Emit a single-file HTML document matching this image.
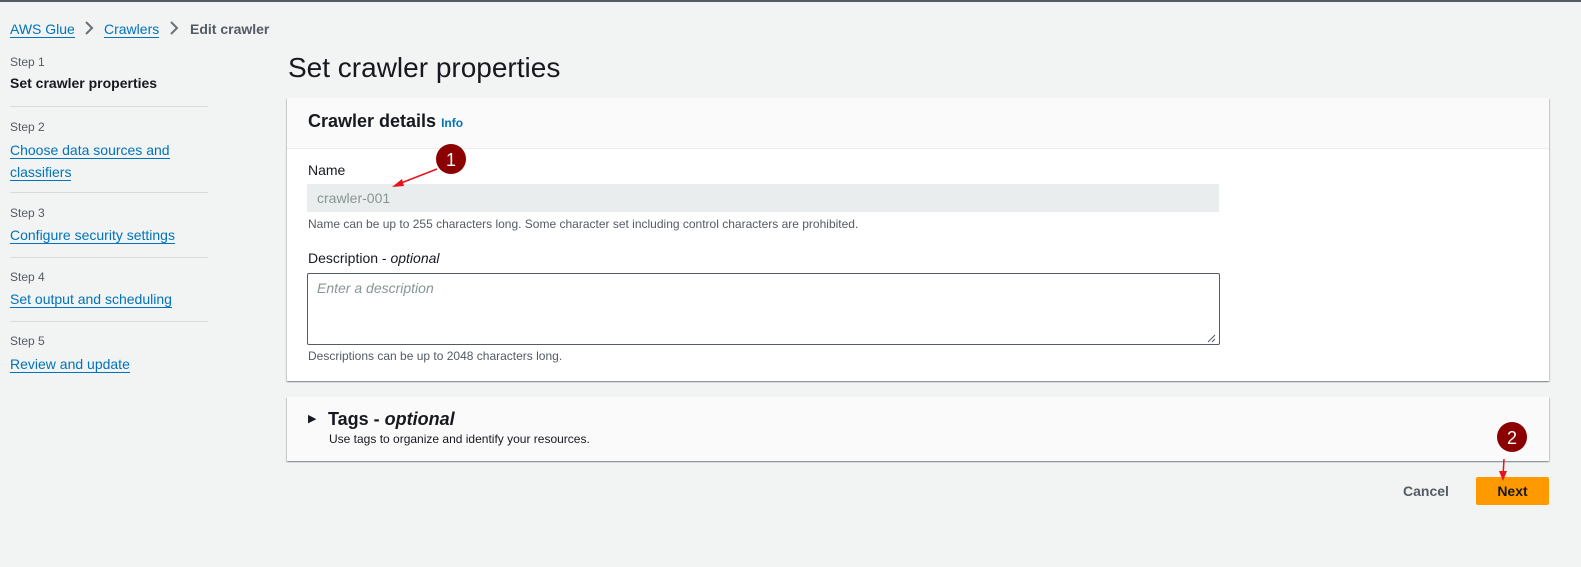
<!DOCTYPE html>
<html><head><meta charset="utf-8"><style>
body{margin:0;width:1581px;height:567px;background:#f2f3f3;font-family:"Liberation Sans",sans-serif;position:relative;overflow:hidden;color:#16191f}
.a{position:absolute;white-space:nowrap}
.sl{color:#0073bb;border-bottom:1px solid #0073bb;line-height:20px}
.step{font-size:12px;color:#545b64}
.sep{position:absolute;left:10px;width:198px;height:1px;background:#d5dbdb}
.card{position:absolute;left:287px;width:1262px;background:#fff;box-shadow:0 1px 1px rgba(0,28,36,.3),1px 1px 1px rgba(0,28,36,.15),-1px 1px 1px rgba(0,28,36,.15)}
.hint{font-size:12px;color:#545b64}
</style></head><body>
<div class="a" style="left:0;top:0;width:1581px;height:2px;background:#545b64"></div>
<div class="a" style="left:10px;top:19px;font-size:14px"><span class="sl">AWS Glue</span></div>
<svg class="a" style="left:83px;top:20px" width="12" height="16"><path d="M3 2 L9 8 L3 14" stroke="#687078" stroke-width="2" fill="none"/></svg>
<div class="a" style="left:104px;top:19px;font-size:14px"><span class="sl">Crawlers</span></div>
<svg class="a" style="left:168px;top:20px" width="12" height="16"><path d="M3 2 L9 8 L3 14" stroke="#687078" stroke-width="2" fill="none"/></svg>
<div class="a" style="left:190px;top:21px;font-size:14px;font-weight:bold;color:#545b64">Edit crawler</div>

<div class="a step" style="left:10px;top:55px">Step 1</div>
<div class="a" style="left:10px;top:75px;font-size:14px;font-weight:bold">Set crawler properties</div>
<div class="sep" style="top:106px"></div>
<div class="a step" style="left:10px;top:120px">Step 2</div>
<div class="a" style="left:10px;top:139px;font-size:14px;line-height:22px"><span class="sl">Choose data sources and</span><br><span class="sl">classifiers</span></div>
<div class="sep" style="top:192px"></div>
<div class="a step" style="left:10px;top:206px">Step 3</div>
<div class="a" style="left:10px;top:225px;font-size:14px"><span class="sl">Configure security settings</span></div>
<div class="sep" style="top:257px"></div>
<div class="a step" style="left:10px;top:270px">Step 4</div>
<div class="a" style="left:10px;top:289px;font-size:14px"><span class="sl">Set output and scheduling</span></div>
<div class="sep" style="top:321px"></div>
<div class="a step" style="left:10px;top:334px">Step 5</div>
<div class="a" style="left:10px;top:354px;font-size:14px"><span class="sl">Review and update</span></div>

<div class="a" style="left:288px;top:52px;font-size:28px;color:#16191f">Set crawler properties</div>

<div class="card" style="top:98px;height:283px">
<div style="height:50px;background:#fafafa;border-bottom:1px solid #eaeded"></div>
</div>
<div class="a" style="left:308px;top:111px;font-size:18px;font-weight:bold">Crawler details <span style="font-size:12px;color:#0073bb">Info</span></div>
<div class="a" style="left:308px;top:162px;font-size:14px">Name</div>
<div class="a" style="left:307px;top:184px;width:912px;height:28px;background:#eaeded"></div>
<div class="a" style="left:317px;top:190px;font-size:14px;color:#879596">crawler-001</div>
<div class="a hint" style="left:308px;top:217px">Name can be up to 255 characters long. Some character set including control characters are prohibited.</div>
<div class="a" style="left:308px;top:250px;font-size:14px">Description - <i>optional</i></div>
<div class="a" style="left:307px;top:273px;width:911px;height:70px;border:1px solid #545b64;border-radius:2px"></div>
<div class="a" style="left:317px;top:280px;font-size:14px;color:#879596;font-style:italic">Enter a description</div>
<svg class="a" style="left:1206px;top:333px" width="10" height="10"><path d="M9 2 L2 9 M9 6 L6 9" stroke="#545b64" stroke-width="1"/></svg>
<div class="a hint" style="left:308px;top:349px">Descriptions can be up to 2048 characters long.</div>

<div class="card" style="top:397px;height:64px;background:#fafafa"></div>
<div class="a" style="left:308px;top:412px;font-size:11px">&#9654;</div>
<div class="a" style="left:328px;top:409px;font-size:18px;font-weight:bold">Tags - <i>optional</i></div>
<div class="a hint" style="left:329px;top:432px;color:#16191f">Use tags to organize and identify your resources.</div>

<div class="a" style="left:1403px;top:483px;font-size:14px;font-weight:bold;color:#545b64">Cancel</div>
<div class="a" style="left:1476px;top:477px;width:73px;height:28px;background:#ff9900;border-radius:2px;font-size:14px;font-weight:bold;line-height:28px;text-align:center">Next</div>

<svg class="a" style="left:0;top:0" width="1581" height="567">
<circle cx="451" cy="159" r="15" fill="#8b0000"/>
<text x="451" y="166" font-size="18" fill="#fff" text-anchor="middle" font-family="Liberation Sans">1</text>
<line x1="437" y1="169" x2="396" y2="185" stroke="#e8141b" stroke-width="1.5"/>
<path d="M392 187 L402 179 L404 186 Z" fill="#e8141b"/>
<circle cx="1512" cy="437" r="15" fill="#8b0000"/>
<text x="1512" y="444" font-size="18" fill="#fff" text-anchor="middle" font-family="Liberation Sans">2</text>
<line x1="1504" y1="459" x2="1503" y2="476" stroke="#e8141b" stroke-width="1.5"/>
<path d="M1503 481 L1499 471 L1507 471 Z" fill="#e8141b"/>
</svg>
</body></html>
